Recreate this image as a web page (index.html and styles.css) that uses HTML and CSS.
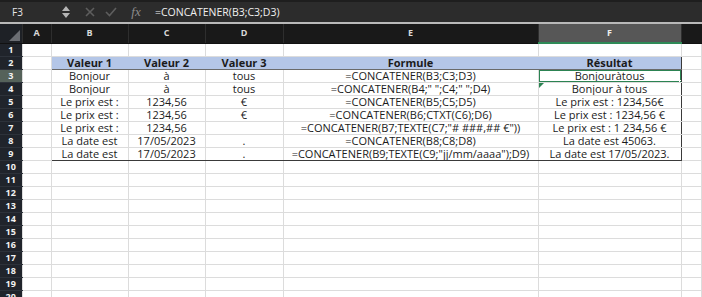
FILE: index.html
```html
<!doctype html>
<html>
<head>
<meta charset="utf-8">
<title>CONCATENER</title>
<link rel="stylesheet" href="styles.css">
</head>
<body>
<div class="fbar">
  <div class="namebox">F3</div>
  <div class="stepper">
    <svg width="8" height="12" viewBox="0 0 8 12"><path d="M4 0 L8 5 L0 5 Z M0 7 L8 7 L4 12 Z" fill="#b5b5b5"/></svg>
  </div>
  <div class="ficon">
    <svg width="10" height="10" viewBox="0 0 10 10"><path d="M1 1 L9 9 M9 1 L1 9" stroke="#5e5e5e" stroke-width="1.6"/></svg>
  </div>
  <div class="ficon">
    <svg width="12" height="10" viewBox="0 0 12 10"><path d="M1 5 L4.5 8.5 L11 1" stroke="#5e5e5e" stroke-width="1.6" fill="none"/></svg>
  </div>
  <div class="fx"><i>fx</i></div>
  <div class="formula">=CONCATENER(B3;C3;D3)</div>
</div>
<div class="sep"></div>

<table class="sheet">
  <colgroup>
    <col style="width:22px"><col style="width:29px"><col style="width:77px"><col style="width:77px">
    <col style="width:78px"><col style="width:255px"><col style="width:143px"><col>
  </colgroup>
  <tr class="colhdr">
    <th class="corner"><span class="tri"></span></th>
    <th>A</th><th>B</th><th>C</th><th>D</th><th>E</th><th class="cur">F</th><th></th>
  </tr>
  <tr><th class="rh">1</th><td></td><td></td><td></td><td></td><td></td><td></td><td></td></tr>
  <tr class="thead">
    <th class="rh">2</th><td></td>
    <td class="bl">Valeur 1</td><td>Valeur 2</td><td>Valeur 3</td><td>Formule</td><td class="br">Résultat</td><td class="after"></td>
  </tr>
  <tr>
    <th class="rh cur">3</th><td></td>
    <td class="bl">Bonjour</td><td>à</td><td>tous</td><td>=CONCATENER(B3;C3;D3)</td><td class="br sel">Bonjouràtous<span class="selbox"><span class="handle"></span></span></td><td class="after"></td>
  </tr>
  <tr>
    <th class="rh">4</th><td></td>
    <td class="bl">Bonjour</td><td>à</td><td>tous</td><td>=CONCATENER(B4;" ";C4;" ";D4)</td><td class="br warn">Bonjour à tous</td><td class="after"></td>
  </tr>
  <tr>
    <th class="rh">5</th><td></td>
    <td class="bl">Le prix est :</td><td>1234,56</td><td>€</td><td>=CONCATENER(B5;C5;D5)</td><td class="br">Le prix est : 1234,56€</td><td class="after"></td>
  </tr>
  <tr>
    <th class="rh">6</th><td></td>
    <td class="bl">Le prix est :</td><td>1234,56</td><td>€</td><td>=CONCATENER(B6;CTXT(C6);D6)</td><td class="br">Le prix est : 1234,56 €</td><td class="after"></td>
  </tr>
  <tr>
    <th class="rh">7</th><td></td>
    <td class="bl">Le prix est :</td><td>1234,56</td><td></td><td>=CONCATENER(B7;TEXTE(C7;"# ###,## €"))</td><td class="br">Le prix est : 1 234,56 €</td><td class="after"></td>
  </tr>
  <tr>
    <th class="rh">8</th><td></td>
    <td class="bl">La date est</td><td>17/05/2023</td><td>.</td><td>=CONCATENER(B8;C8;D8)</td><td class="br">La date est 45063.</td><td class="after"></td>
  </tr>
  <tr class="tlast">
    <th class="rh">9</th><td></td>
    <td class="bl">La date est</td><td>17/05/2023</td><td>.</td><td>=CONCATENER(B9;TEXTE(C9;"jj/mm/aaaa");D9)</td><td class="br">La date est 17/05/2023.</td><td class="after"></td>
  </tr>
  <tr><th class="rh">10</th><td></td><td></td><td></td><td></td><td></td><td></td><td></td></tr>
  <tr><th class="rh">11</th><td></td><td></td><td></td><td></td><td></td><td></td><td></td></tr>
  <tr><th class="rh">12</th><td></td><td></td><td></td><td></td><td></td><td></td><td></td></tr>
  <tr><th class="rh">13</th><td></td><td></td><td></td><td></td><td></td><td></td><td></td></tr>
  <tr><th class="rh">14</th><td></td><td></td><td></td><td></td><td></td><td></td><td></td></tr>
  <tr><th class="rh">15</th><td></td><td></td><td></td><td></td><td></td><td></td><td></td></tr>
  <tr><th class="rh">16</th><td></td><td></td><td></td><td></td><td></td><td></td><td></td></tr>
  <tr><th class="rh">17</th><td></td><td></td><td></td><td></td><td></td><td></td><td></td></tr>
  <tr><th class="rh">18</th><td></td><td></td><td></td><td></td><td></td><td></td><td></td></tr>
  <tr><th class="rh">19</th><td></td><td></td><td></td><td></td><td></td><td></td><td></td></tr>
  <tr><th class="rh">20</th><td></td><td></td><td></td><td></td><td></td><td></td><td></td></tr>
</table>
</body>
</html>
```

FILE: styles.css
```css
*{margin:0;padding:0;box-sizing:border-box}
html,body{background:#fff;overflow:hidden}
body{width:702px;height:297px;font-family:"Open Sans","Liberation Sans",sans-serif}

.fbar{height:22px;background:#2c2c2c;display:flex;align-items:center;color:#e6e6e6;border-top:2px solid #1e1e1e}
.namebox{width:58px;padding-left:12px;font-size:10px}
.stepper{width:16px;display:flex;align-items:center;justify-content:center;margin-right:5px}
.ficon{width:21px;display:flex;align-items:center;justify-content:center}
.fx{width:28px;text-align:center;font-family:"Liberation Serif",serif;font-size:13px;color:#8d8d8d;margin-left:1px}
.formula{padding-left:5px;font-size:10.5px;color:#f0f0f0}
.sep{height:2px;background:#b9b9b9}

.sheet{border-collapse:collapse;table-layout:fixed;width:702px;font-size:11px;color:#1b1b1b}
.sheet tr{height:13px}
.sheet td,.sheet th{padding:0;line-height:12px;white-space:nowrap;overflow:hidden;text-align:center;font-weight:normal}
.sheet td{border:1px solid #dcdcdc}
.sheet .colhdr{height:19px}

.colhdr th{background:#191919;color:#d8d8d8;font-size:9px;font-weight:bold;border-left:1px solid #2e2e2e;border-bottom:1px solid #111}
.colhdr th.cur{background:#575757;color:#eee;border-bottom:2px solid #2f8a57}
.colhdr th.corner{background:#1e2126;position:relative;border-left:0}
.tri{position:absolute;right:2px;bottom:2px;width:0;height:0;border-left:11px solid transparent;border-bottom:11px solid #6a6d72}

.rh{background:#20242b;color:#f2f2f2;font-size:9px;border-bottom:1px solid #2d323a;text-align:center}
.sheet th.rh{font-weight:bold}
.rh.cur{background:#55625a}

.thead td{background:#b4c6e7;font-weight:bold;border-top:1px solid #3a3a3a;border-bottom:1px solid #6a6a6a;border-left-color:#b4c6e7;border-right-color:#b4c6e7}
.thead td:first-of-type,.thead td.after{background:#fff;border-color:#dcdcdc}
.sheet td.bl{border-left:1px solid #3a3a3a}
.sheet td.br{border-right:1px solid #3a3a3a}
.sheet td.after{border-left:1px solid #3a3a3a}
.tlast td{border-bottom:1px solid #3a3a3a}
.tlast td:first-of-type,.tlast td.after{border-bottom-color:#dcdcdc}

.sel,.warn{position:relative}
.selbox{position:absolute;left:-1px;top:-1px;right:-1px;bottom:-1px;border:2px solid #2c8352}
.handle{position:absolute;right:-4px;bottom:-4px;width:5px;height:5px;background:#2c8352;border:1px solid #fff}
.warn::before{content:"";position:absolute;left:0;top:0;width:0;height:0;border-top:5px solid #2c8352;border-right:5px solid transparent}
```
